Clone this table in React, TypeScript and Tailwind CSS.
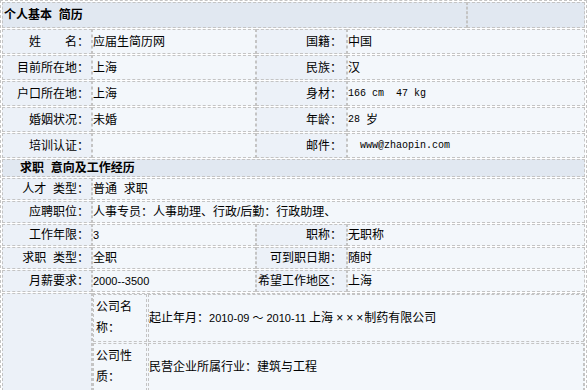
import React from 'react';

const font = { fontFamily: '"Liberation Sans", "Noto Sans CJK SC", sans-serif' };

const Label: React.FC<{ w?: string; children?: React.ReactNode; pr?: string }> = ({ w = 'w-[90px]', children, pr = 'pr-[2px]' }) => (
  <div className={`${w} shrink-0 flex items-center justify-end ${pr} bg-[#ecf1f8] border border-dashed border-[#c4c4c4] whitespace-pre`}>
    {children}
  </div>
);

const Value: React.FC<{ w?: string; children?: React.ReactNode }> = ({ w = 'flex-1', children }) => (
  <div className={`${w} min-w-0 flex items-center bg-[#f3f7fb] border border-dashed border-[#c4c4c4] whitespace-pre`}>
    {children}
  </div>
);

const Mono: React.FC<{ children: React.ReactNode }> = ({ children }) => (
  <span className="text-[10px] whitespace-pre" style={{ fontFamily: '"Liberation Mono", monospace' }}>{children}</span>
);

const Row4: React.FC<{ h: string; a: string; b: React.ReactNode; c: string; d: React.ReactNode }> = ({ h, a, b, c, d }) => (
  <div className={`flex ${h}`}>
    <Label>{a}</Label>
    <Value w="w-[164px]">{b}</Value>
    <Label w="w-[91px]" pr="pr-[4px]">{c}</Label>
    <Value>{d}</Value>
  </div>
);

const Row2: React.FC<{ h: string; a: string; b: React.ReactNode }> = ({ h, a, b }) => (
  <div className={`flex ${h}`}>
    <Label>{a}</Label>
    <Value>{b}</Value>
  </div>
);

const SubRow: React.FC<{ a: string; b: React.ReactNode }> = ({ a, b }) => (
  <div className="flex gap-px">
    <div className="w-[54px] shrink-0 pl-[2px] pr-[6px] py-[2px] leading-[21px] bg-[#f3f7fb] border border-dashed border-[#c4c4c4]">
      {a}
    </div>
    <div className="flex-1 flex items-center bg-[#f3f7fb] border border-dashed border-[#c4c4c4]">{b}</div>
  </div>
);

export default function App() {
  return (
    <div className="w-[587px] h-[390px] overflow-hidden bg-white text-[12px] text-black" style={font}>
      <div className="border border-dashed border-[#c4c4c4] p-px flex flex-col gap-px">
        {/* 个人基本 简历 */}
        <div className="flex h-[26px]">
          <div className="flex-1 flex items-center pl-[1px] font-bold whitespace-pre bg-[#e1e8f1] border border-dashed border-[#c4c4c4]">个人基本  简历</div>
          <div className="w-[118px] bg-[#e1e8f1] border border-dashed border-[#c4c4c4]" />
        </div>
        <Row4 h="h-[25px]" a="姓　　名：" b="应届生简历网" c="国籍：" d="中国" />
        <Row4 h="h-[25px]" a="目前所在地：" b="上海" c="民族：" d="汉" />
        <Row4 h="h-[25px]" a="户口所在地：" b="上海" c="身材：" d={<Mono>166 cm  47 kg</Mono>} />
        <Row4 h="h-[25px]" a="婚姻状况：" b="未婚" c="年龄：" d={<><Mono>28 </Mono>岁</>} />
        <Row4 h="h-[25px]" a="培训认证：" b="" c="邮件：" d={<Mono>  www@zhaopin.com</Mono>} />

        {/* 求职 意向及工作经历 */}
        <div className="flex h-[18px] items-center pl-[17px] font-bold whitespace-pre bg-[#e1e8f1] border border-dashed border-[#c4c4c4]">求职  意向及工作经历</div>
        <Row2 h="h-[22px]" a="人才  类型：" b="普通  求职" />
        <Row2 h="h-[22px]" a="应聘职位：" b="人事专员：人事助理、行政/后勤：行政助理、" />
        <Row4 h="h-[22px]" a="工作年限：" b={<span className="text-[11px]">3</span>} c="职称：" d="无职称" />
        <Row4 h="h-[22px]" a="求职  类型：" b="全职" c="可到职日期：" d="随时" />
        <Row4 h="h-[22px]" a="月薪要求：" b={<span className="text-[11px]">2000--3500</span>} c="希望工作地区：" d="上海" />

        {/* 工作经历 */}
        <div className="flex">
          <div className="w-[90px] shrink-0 bg-[#ecf1f8] border border-dashed border-[#c4c4c4]" />
          <div className="flex-1 border border-dashed border-[#c4c4c4] bg-[#f3f7fb] flex flex-col gap-px">
            <SubRow
              a="公司名称："
              b={
                <span>
                  起止年月：<span className="text-[11px]">2010-09 ～ 2010-11 </span>上海
                  <span className="mx-[3px]">×</span>
                  <span className="mr-[3px]">×</span>
                  <span className="mr-[1px]">×</span>制药有限公司
                </span>
              }
            />
            <SubRow a="公司性质：" b="民营企业所属行业：建筑与工程" />
            <SubRow a="担任职位：" b="人事专员" />
          </div>
        </div>
      </div>
    </div>
  );
}
